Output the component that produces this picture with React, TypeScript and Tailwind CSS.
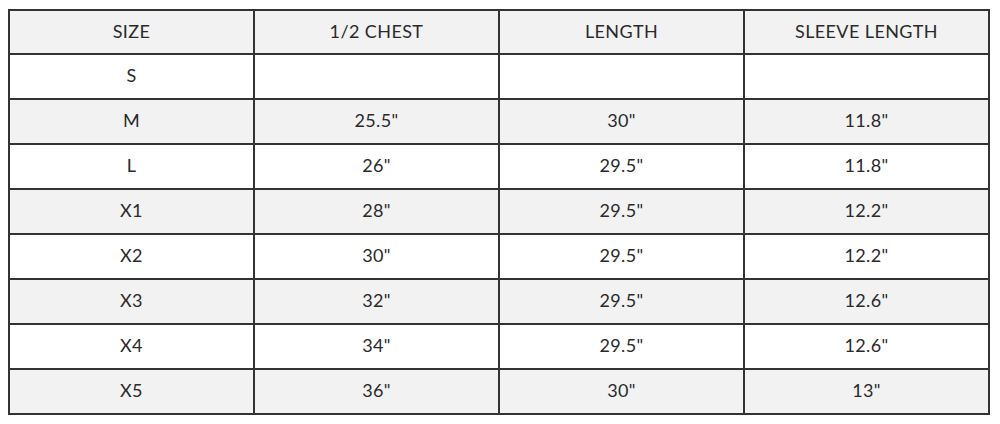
const headers = ["SIZE", "1/2 CHEST", "LENGTH", "SLEEVE LENGTH"];

const rows = [
  ["S", "", "", ""],
  ["M", '25.5"', '30"', '11.8"'],
  ["L", '26"', '29.5"', '11.8"'],
  ["X1", '28"', '29.5"', '12.2"'],
  ["X2", '30"', '29.5"', '12.2"'],
  ["X3", '32"', '29.5"', '12.6"'],
  ["X4", '34"', '29.5"', '12.6"'],
  ["X5", '36"', '30"', '13"'],
];

export default function App() {
  return (
    <div className="h-[424px] w-[1000px] bg-white pl-[8px] pt-[9px] font-['Lato','Liberation_Sans',sans-serif] text-[18px] tracking-[0.4px] text-[#2a2a2a]">
      <table className="w-[982px] table-fixed border-collapse">
        <thead>
          <tr className="h-[44px] bg-[#f2f2f2]">
            {headers.map((h) => (
              <th key={h} className="border-2 border-[#333] pb-[2px] text-center font-normal">
                {h}
              </th>
            ))}
          </tr>
        </thead>
        <tbody>
          {rows.map((r, i) => (
            <tr key={r[0]} className={i % 2 === 1 ? "h-[45px] bg-[#f2f2f2]" : "h-[45px] bg-white"}>
              {r.map((c, j) => (
                <td key={j} className="border-2 border-[#333] pb-[2px] text-center">
                  {c}
                </td>
              ))}
            </tr>
          ))}
        </tbody>
      </table>
    </div>
  );
}
